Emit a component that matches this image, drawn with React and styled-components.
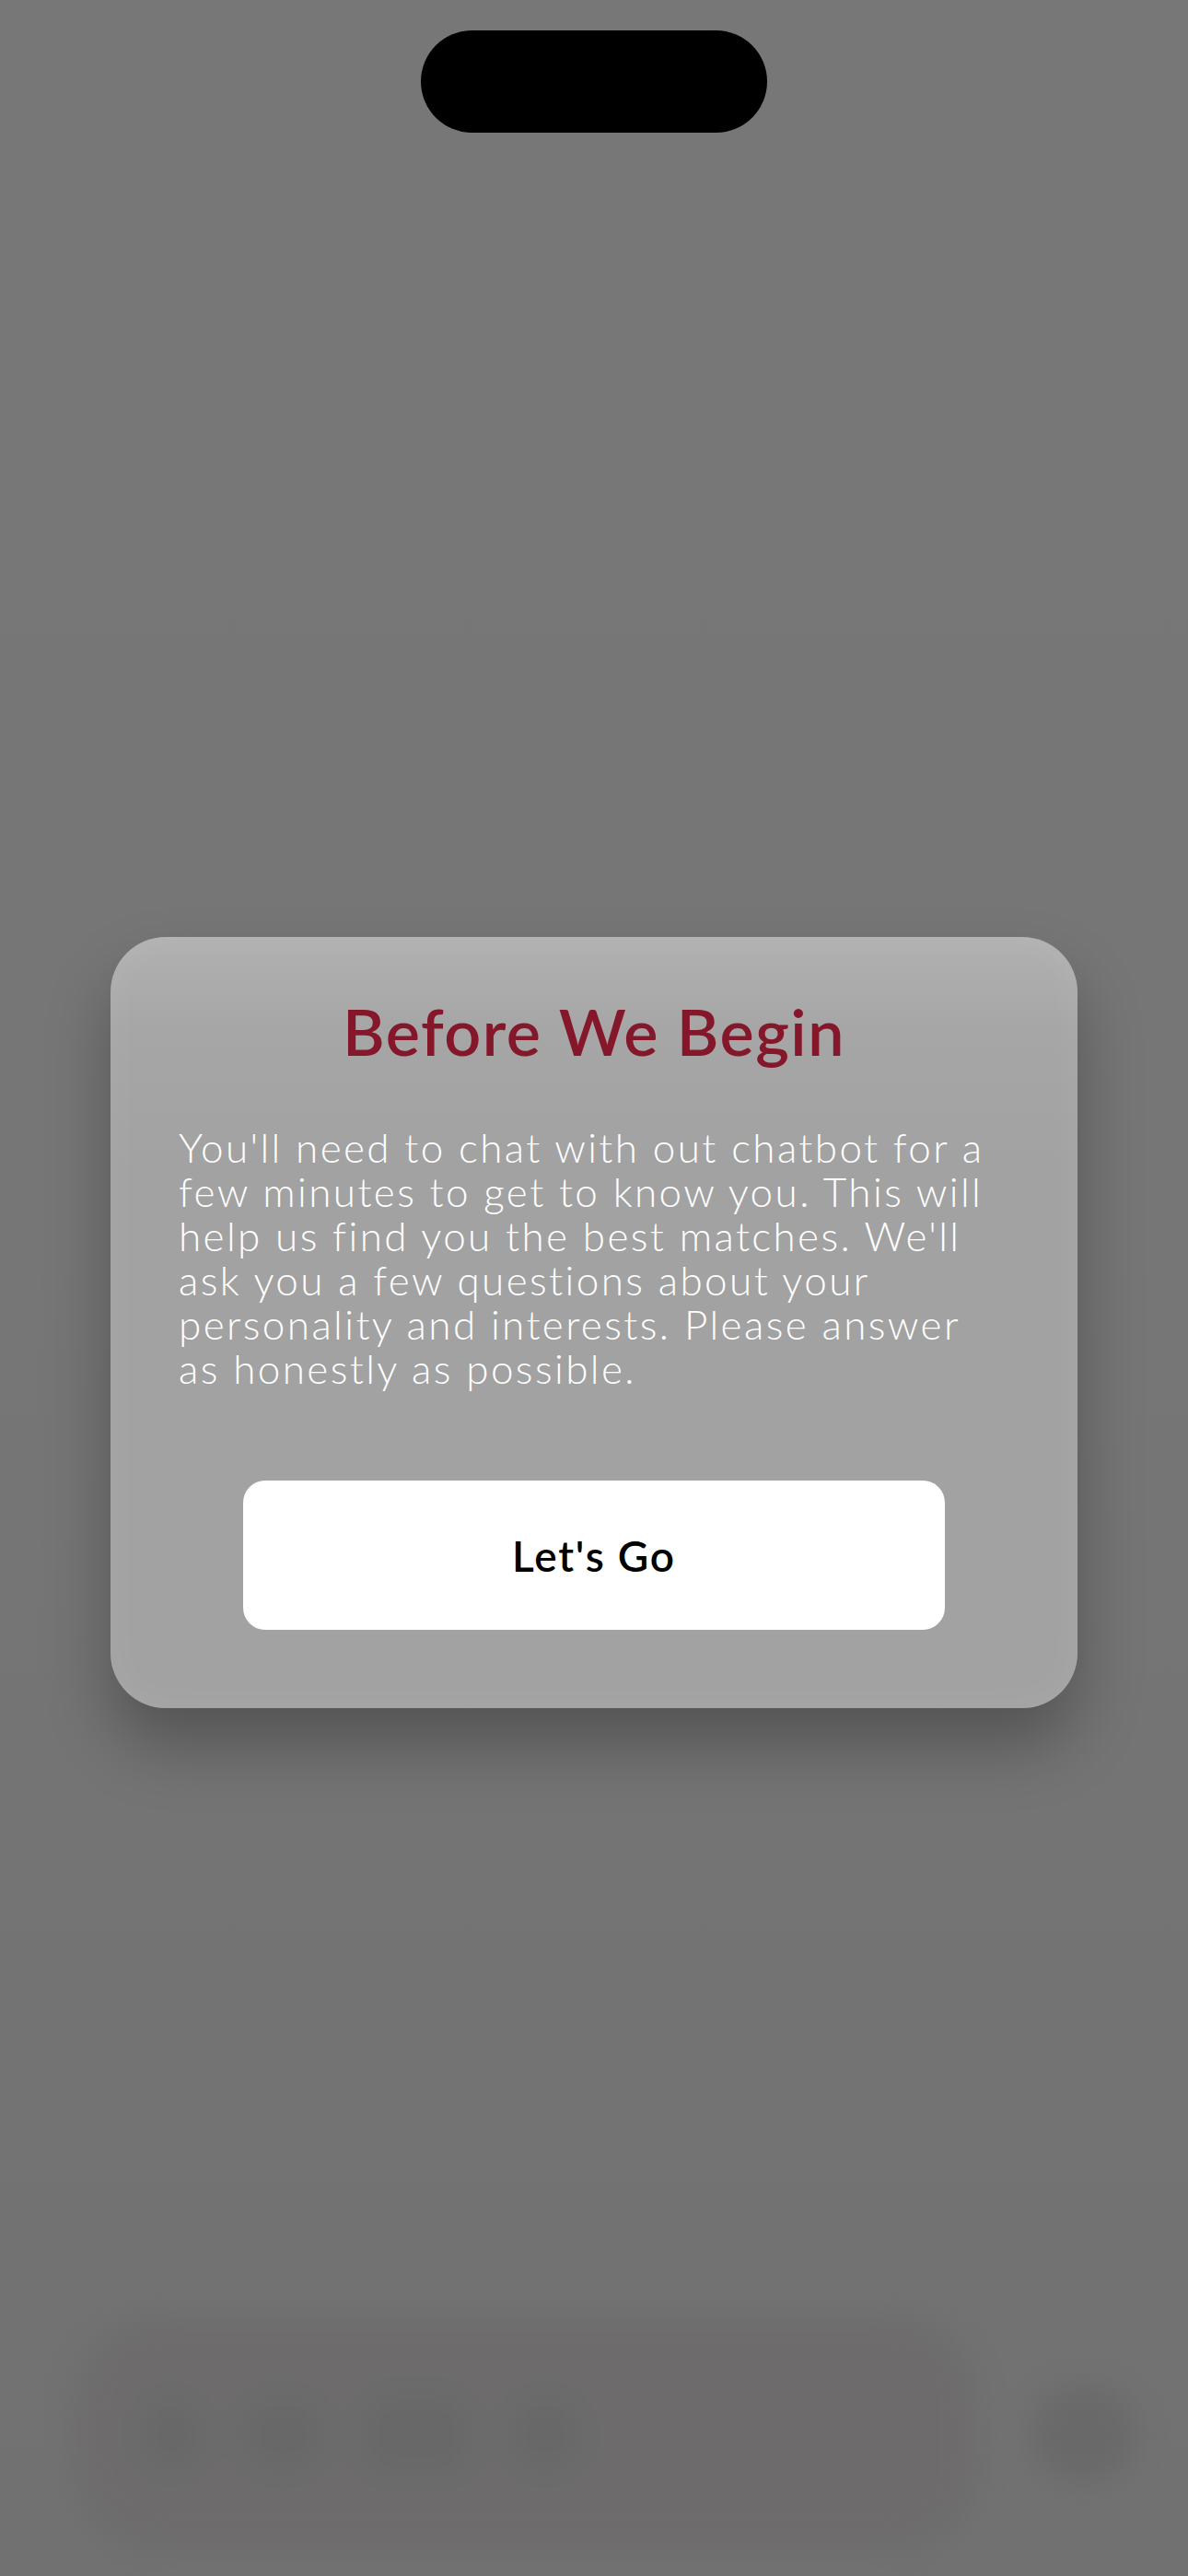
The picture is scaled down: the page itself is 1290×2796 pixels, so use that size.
import React from "react";
import styled, { createGlobalStyle } from "styled-components";

const GlobalStyle = createGlobalStyle`
  html, body {
    margin: 0;
    padding: 0;
    background: #757575;
  }
  * { box-sizing: border-box; }
`;

const Screen = styled.div`
  width: 1290px;
  height: 2796px;
  overflow: hidden;
  display: flex;
  flex-direction: column;
  align-items: center;
  background: linear-gradient(180deg, #777777 0%, #767676 50%, #717171 100%);
  font-family: "Lato", "Inter", "Liberation Sans", sans-serif;
`;

const DynamicIsland = styled.div`
  margin-top: 33px;
  width: 376px;
  height: 111px;
  border-radius: 56px;
  background: #000;
  flex-shrink: 0;
`;

const Modal = styled.section`
  margin-top: 873px;
  width: 1050px;
  height: 837px;
  border-radius: 60px;
  padding: 60px 74px 0;
  display: flex;
  flex-direction: column;
  align-items: center;
  background: linear-gradient(180deg, #b1b1b1 0%, #a6a6a6 12%, #a2a2a2 30%, #a2a2a2 100%);
  box-shadow:
    inset 0 0 40px rgba(255, 255, 255, 0.07),
    0 40px 70px rgba(0, 0, 0, 0.28);
  flex-shrink: 0;
`;

const Title = styled.h1`
  margin: 0;
  font-size: 70px;
  line-height: 84px;
  font-weight: 600;
  color: #85172b;
  text-align: center;
  letter-spacing: 1.5px;
`;

const Body = styled.p`
  margin: 60px 0 0;
  align-self: stretch;
  font-size: 44px;
  line-height: 48px;
  font-weight: 300;
  color: #ffffff;
  white-space: nowrap;
  letter-spacing: 2.4px;
`;

const Button = styled.button`
  margin-top: 98px;
  width: 762px;
  height: 162px;
  border: none;
  border-radius: 24px;
  background: #ffffff;
  color: #000;
  font-family: inherit;
  font-size: 46px;
  font-weight: 600;
  letter-spacing: 1.8px;
  display: flex;
  align-items: center;
  justify-content: center;
  cursor: pointer;
`;

const ComposerArea = styled.div`
  margin-top: auto;
  margin-bottom: 29px;
  width: 1290px;
  display: flex;
  align-items: center;
  padding: 0 56px 0 82px;
  gap: 58px;
  filter: blur(16px);
  opacity: 0.85;
`;

const InputBar = styled.div`
  width: 979px;
  height: 250px;
  border-radius: 90px;
  background: #6d6b6b;
  display: flex;
  align-items: center;
  padding: 0 70px;
  gap: 40px;
`;

const Blob = styled.div`
  width: ${(p) => p.$w}px;
  height: ${(p) => p.$h}px;
  border-radius: 30px;
  background: #686767;
`;

const RoundButton = styled.div`
  width: 115px;
  height: 106px;
  border-radius: 50%;
  background: #686868;
`;

export default function App() {
  return (
    <>
      <GlobalStyle />
      <Screen>
        <DynamicIsland />
        <Modal>
          <Title>Before We Begin</Title>
          <Body>
            You'll need to chat with out chatbot for a<br />
            few minutes to get to know you. This will<br />
            help us find you the best matches. We'll<br />
            ask you a few questions about your<br />
            personality and interests. Please answer<br />
            as honestly as possible.
          </Body>
          <Button>Let's Go</Button>
        </Modal>
        <ComposerArea>
          <InputBar>
            <Blob $w={70} $h={80} />
            <Blob $w={90} $h={80} />
            <Blob $w={120} $h={90} />
            <Blob $w={80} $h={80} />
          </InputBar>
          <RoundButton />
        </ComposerArea>
      </Screen>
    </>
  );
}
